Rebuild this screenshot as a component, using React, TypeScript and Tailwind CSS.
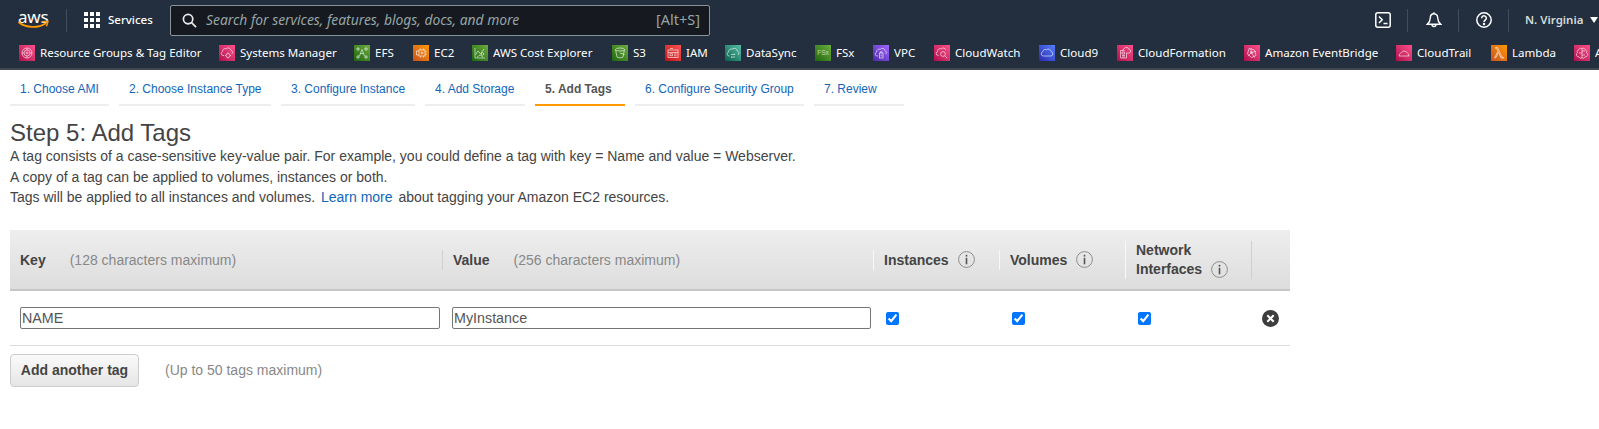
import React from "react";

const PINK = "bg-linear-to-tr from-[#b0084d] to-[#ff4f8b]";
const GREEN = "bg-linear-to-tr from-[#1b660f] to-[#6cae3e]";
const ORANGE = "bg-linear-to-tr from-[#c8511b] to-[#ff9900]";
const RED = "bg-linear-to-tr from-[#bd0816] to-[#ff5252]";
const TEAL = "bg-linear-to-tr from-[#055f4e] to-[#56c0a7]";
const PURPLE = "bg-linear-to-tr from-[#4d27a8] to-[#a166ff]";
const BLUE = "bg-linear-to-tr from-[#2e27ad] to-[#527fff]";

const glyphs: Record<string, React.ReactNode> = {
  resource: (
    <>
      <circle cx="8" cy="8" r="5" />
      <circle cx="8" cy="8" r="3" />
      <circle cx="8" cy="8" r="1" />
      <path d="M3 8h2M11 8h2M8 3v2M8 11v2" />
    </>
  ),
  systems: (
    <>
      <path d="M5 10.5H4a2 2 0 0 1-.4-3.900 2.600 2.600 0 0 1 3.600-2.800 2.800 2.800 0 0 1 4.800 1.600 2 2 0 0 1 .9 3.400" />
      <circle cx="9" cy="10.500" r="2" />
      <path d="M9 7.500v1M9 12.500v1M6 10.500h1M11 10.500h1" />
    </>
  ),
  efs: (
    <>
      <path d="M8 4.500 5.500 11M8 4.500l2.500 6.500M6.300 8.500h3.400" />
      <path d="M3 3h2v2H3zM11 3h2v2h-2zM3 11h2v2H3zM11 11h2v2h-2z" />
    </>
  ),
  ec2: (
    <>
      <path d="M6 10H3.500V6H6" />
      <rect x="6" y="5" width="6" height="6" />
      <path d="M7.500 3.500V5M10.500 3.500V5M7.500 11v1.500M10.500 11v1.500M12 7h1.500M12 9.500h1.500" />
      <circle cx="9" cy="8" r="1" />
    </>
  ),
  cost: (
    <>
      <path d="M3 3v10h10" />
      <path d="M3.500 10 6 6l2.500 3L12 4" />
      <path d="M5 12l3-2 3 2" />
      <circle cx="10.500" cy="9" r="1.300" />
    </>
  ),
  s3: (
    <>
      <ellipse cx="8" cy="4.500" rx="4.500" ry="1.500" />
      <path d="M3.500 4.500 5 12c.2 1 5.800 1 6 0l1.500-7.500" />
      <path d="M8 8l4.500 1.500" />
    </>
  ),
  iam: (
    <>
      <rect x="3" y="5" width="10" height="7.500" />
      <path d="M3 7.500h10" />
      <rect x="5" y="8.800" width="2.500" height="2" />
      <path d="M9 9h2.500M9 10.800h2.500M5 3.500h3" />
    </>
  ),
  datasync: (
    <>
      <path d="M4.500 11H4a2 2 0 0 1-.5-3.900 3 3 0 0 1 4-3 2.800 2.800 0 0 1 4.800 1.900 2.300 2.300 0 0 1 .7 4" />
      <path d="M6 9.500h4l-1-1M10 12H6l1 1" />
    </>
  ),
  vpc: (
    <>
      <path d="M5 11H4a2 2 0 0 1-.4-3.900 2.600 2.600 0 0 1 3.600-2.800 2.800 2.800 0 0 1 4.900 1.500 2.200 2.200 0 0 1 .8 3.300" />
      <rect x="6.500" y="8" width="3.500" height="5" />
      <path d="M7.500 8V6.800a.8.800 0 0 1 1.500 0V8M8.200 9.500v2" />
    </>
  ),
  watch: (
    <>
      <path d="M4.500 10.500H4a2 2 0 0 1-.4-3.900 2.600 2.600 0 0 1 3.600-2.800 2.800 2.800 0 0 1 4.600 1.200" />
      <circle cx="9" cy="9" r="2.400" />
      <path d="m10.800 10.800 2.400 2.400" />
    </>
  ),
  cloud9: (
    <path d="M4.800 11H4.300a2.200 2.200 0 0 1-.5-4.300 2.800 2.800 0 0 1 3.700-2 3 3 0 0 1 4.800 2 2.200 2.200 0 0 1-.4 4.300z" />
  ),
  formation: (
    <>
      <path d="M9.500 8V13h-6V5.500h4" />
      <path d="M7.500 7h-2.500v2h2.500zM5 10.500h3M5 12h3" />
      <path d="M6 5.200a2 2 0 0 1 1.500-1.900 2.600 2.600 0 0 1 4.500 1 1.900 1.900 0 0 1 .2 3.700H9.500" />
    </>
  ),
  bridge: (
    <>
      <path d="M5 3.500 10.500 5 12 10.500 7.500 12.500 3.500 9z" />
      <path d="M7 3v4.500l5-1M4 11l3.500-3.500 3 5" />
      <circle cx="7.500" cy="7.500" r="1" />
    </>
  ),
  trail: (
    <path d="M3 11h10a5 5 0 0 0-2.500-4 3.500 3.500 0 0 0-5 .4A4.500 4.500 0 0 0 3 11z" />
  ),
  lambda: (
    <path d="M3.500 13 7 6.200 5.700 3.300H4.500V2.500h2l4.500 9.800h1.500v.8h-2.200L7.500 7.500 4.600 13z" />
  ),
  brain: (
    <>
      <path d="M8 3.500v9.500M8 3.500a2 2 0 0 0-3 1 2.200 2.200 0 0 0-1.500 3.200A2.200 2.200 0 0 0 5 11.800a2 2 0 0 0 3 1" />
      <path d="M8 3.500a2 2 0 0 1 3 1 2.200 2.200 0 0 1 1.500 3.200 2.200 2.200 0 0 1-1.500 4.100 2 2 0 0 1-3 1" />
      <path d="M5 8h3M8 6h3M8 10h3" />
    </>
  ),
};

const services: { name: string; cls: string; icon: string; w: string }[] = [
  { name: "Resource Groups & Tag Editor", cls: PINK, icon: "resource", w: "w-[200px]" },
  { name: "Systems Manager", cls: PINK, icon: "systems", w: "w-[135px]" },
  { name: "EFS", cls: GREEN, icon: "efs", w: "w-[59px]" },
  { name: "EC2", cls: ORANGE, icon: "ec2", w: "w-[59px]" },
  { name: "AWS Cost Explorer", cls: GREEN, icon: "cost", w: "w-[140px]" },
  { name: "S3", cls: GREEN, icon: "s3", w: "w-[53px]" },
  { name: "IAM", cls: RED, icon: "iam", w: "w-[60px]" },
  { name: "DataSync", cls: TEAL, icon: "datasync", w: "w-[90px]" },
  { name: "FSx", cls: GREEN, icon: "fsx", w: "w-[58px]" },
  { name: "VPC", cls: PURPLE, icon: "vpc", w: "w-[61px]" },
  { name: "CloudWatch", cls: PINK, icon: "watch", w: "w-[105px]" },
  { name: "Cloud9", cls: BLUE, icon: "cloud9", w: "w-[78px]" },
  { name: "CloudFormation", cls: PINK, icon: "formation", w: "w-[127px]" },
  { name: "Amazon EventBridge", cls: PINK, icon: "bridge", w: "w-[152px]" },
  { name: "CloudTrail", cls: PINK, icon: "trail", w: "w-[95px]" },
  { name: "Lambda", cls: ORANGE, icon: "lambda", w: "w-[83px]" },
  { name: "Amazon Augmented AI", cls: PINK, icon: "brain", w: "w-[160px]" },
];

function ServiceIcon({ cls, icon }: { cls: string; icon: string }) {
  return (
    <span className={`block w-4 h-4 shrink-0 ${cls}`}>
      <svg viewBox="0 0 16 16" className="w-4 h-4" fill="none" stroke="#fff" strokeWidth="0.7" opacity="0.85">
        {icon === "fsx" ? (
          <text x="8" y="10.300" textAnchor="middle" fontSize="6.500" fill="#fff" stroke="none" opacity="0.75" fontFamily="Liberation Sans, sans-serif">FSx</text>
        ) : (
          glyphs[icon]
        )}
      </svg>
    </span>
  );
}

function Divider() {
  return <span className="block w-px h-[23px] bg-[#414b59] shrink-0" />;
}

function InfoIcon({ className = "" }: { className?: string }) {
  return (
    <svg viewBox="0 0 17 17" className={`w-[17px] h-[17px] shrink-0 ${className}`}>
      <circle cx="8.500" cy="8.500" r="7.900" fill="none" stroke="#8c8c8c" strokeWidth="1" />
      <rect x="7.700" y="3.800" width="1.600" height="1.800" fill="#555" />
      <rect x="7.700" y="6.800" width="1.600" height="6.500" fill="#555" />
    </svg>
  );
}

const tabs: { label: string; w: string; active?: boolean }[] = [
  { label: "1. Choose AMI", w: "w-[99px]" },
  { label: "2. Choose Instance Type", w: "w-[152px]" },
  { label: "3. Configure Instance", w: "w-[134px]" },
  { label: "4. Add Storage", w: "w-[100px]" },
  { label: "5. Add Tags", w: "w-[90px]", active: true },
  { label: "6. Configure Security Group", w: "w-[169px]" },
  { label: "7. Review", w: "w-[90px]" },
];

export default function App() {
  return (
    <div className="w-full min-h-[429px] bg-white text-[#444] font-['Liberation_Sans',Arial,sans-serif] overflow-hidden">
      <header className="bg-[#232f3e] border-b-2 border-[#414750] font-['Noto_Sans',sans-serif] text-white">
        <div className="h-10 flex items-center pl-[18px] pr-[1px]">
          <div className="relative w-[31px] h-[22px] shrink-0">
            <span className="block text-[17px] leading-[15px] font-normal tracking-[-0.2px]">aws</span>
            <svg viewBox="0 0 32 10" className="absolute left-0 top-[11px] w-[32px] h-[10px]">
              <path d="M1 2.500C8 8 20 8.500 27.500 3.500" fill="none" stroke="#ff9900" strokeWidth="1.800" strokeLinecap="round" />
              <path d="M24.500 1.800 30 1.300 28.500 6.300" fill="none" stroke="#ff9900" strokeWidth="1.500" strokeLinejoin="round" />
            </svg>
          </div>
          <span className="ml-[17px]"><Divider /></span>
          <svg viewBox="0 0 16 16" className="ml-[17px] w-4 h-4 shrink-0" fill="#fff">
            <rect x="0" y="0" width="4" height="4" /><rect x="6" y="0" width="4" height="4" /><rect x="12" y="0" width="4" height="4" />
            <rect x="0" y="6" width="4" height="4" /><rect x="6" y="6" width="4" height="4" /><rect x="12" y="6" width="4" height="4" />
            <rect x="0" y="12" width="4" height="4" /><rect x="6" y="12" width="4" height="4" /><rect x="12" y="12" width="4" height="4" />
          </svg>
          <span className="ml-2 w-[62px] text-[11.500px] font-medium shrink-0">Services</span>
          <div className="w-[540px] h-[31px] shrink-0 flex items-center rounded-[2px] border border-[#879596] bg-[#16191f] pl-[11px] pr-[9px]">
            <svg viewBox="0 0 16 16" className="w-[15px] h-[15px] shrink-0" fill="none" stroke="#e9ebed" strokeWidth="1.800">
              <circle cx="6.500" cy="6.500" r="5" />
              <path d="m10.200 10.200 4.800 4.800" />
            </svg>
            <span className="ml-[9px] italic text-[13.850px] text-[#95a5a6]">Search for services, features, blogs, docs, and more</span>
            <span className="ml-auto text-[14.500px] text-[#95a5a6]">[Alt+S]</span>
          </div>
          <div className="ml-auto flex items-center">
            <svg viewBox="0 0 16 16" className="w-4 h-4 shrink-0" fill="none" stroke="#fff" strokeWidth="1.500">
              <rect x="0.800" y="0.800" width="14.400" height="14.400" rx="2" />
              <path d="m4 4.500 3.200 3.200L4 11M8.500 11.500h4" />
            </svg>
            <span className="ml-[16px]"><Divider /></span>
            <svg viewBox="0 0 16 16" className="ml-[18px] w-4 h-4 shrink-0" fill="none" stroke="#fff" strokeWidth="1.400">
              <path d="M8 1.800c-2.500 0-3.700 1.900-3.700 4.200 0 3-1.300 4.700-3 6.300h13.400c-1.700-1.600-3-3.300-3-6.300 0-2.300-1.200-4.200-3.700-4.200z" />
              <path d="M8 .2v1.600M6 12.500a2 2 0 0 0 4 0" />
            </svg>
            <span className="ml-[16px]"><Divider /></span>
            <svg viewBox="0 0 16 16" className="ml-[17px] w-4 h-4 shrink-0" fill="none" stroke="#fff" strokeWidth="1.500">
              <circle cx="8" cy="8" r="7.200" />
              <path d="M5.700 6.200A2.300 2.300 0 1 1 9.300 8c-.8.500-1.300 1-1.300 2" />
              <circle cx="8" cy="12" r=".5" fill="#fff" />
            </svg>
            <span className="ml-[16px]"><Divider /></span>
            <span className="ml-[16px] w-[65px] text-[11.500px] font-semibold text-[#d5dbdb]">N. Virginia</span>
            <svg viewBox="0 0 8 6" className="w-2 h-[6px]" fill="#fff"><path d="M0 0h8L4 6z" /></svg>
          </div>
        </div>
        <nav className="h-7 flex items-center pl-[19px] pb-[2px] overflow-hidden whitespace-nowrap text-[11.550px] text-white">
          {services.map((s) => (
            <div key={s.name} className={`flex items-center gap-[5px] shrink-0 ${s.w}`}>
              <ServiceIcon cls={s.cls} icon={s.icon} />
              <span>{s.name}</span>
            </div>
          ))}
        </nav>
      </header>

      <div className="flex gap-[10px] pl-[10px] text-xs">
        {tabs.map((t) => (
          <div
            key={t.label}
            className={`${t.w} pl-[10px] pt-[11px] pb-[7px] leading-4 border-b-2 whitespace-nowrap ${
              t.active ? "border-[#ff9900] text-[#555] font-bold" : "border-[#eeeeee] text-[#1166bb]"
            }`}
          >
            {t.label}
          </div>
        ))}
      </div>

      <main className="px-[10px]">
        <h1 className="mt-[14px] text-2xl leading-[26px] font-normal text-[#444]">Step 5: Add Tags</h1>
        <div className="text-sm leading-[20.670px] text-[#444]">
          <p>A tag consists of a case-sensitive key-value pair. For example, you could define a tag with key = Name and value = Webserver.</p>
          <p>A copy of a tag can be applied to volumes, instances or both.</p>
          <p>
            Tags will be applied to all instances and volumes. <span className="ml-[2px] text-[#1166bb]">Learn more</span>{" "}
            <span className="ml-[2px]">about tagging your Amazon EC2 resources.</span>
          </p>
        </div>

        <div className="mt-[22px] w-[1280px]">
          <div className="h-[61px] grid grid-cols-[432px_431px_126px_126px_126px_39px] items-center bg-linear-to-b from-[#eeeeee] to-[#dddddd] border-b-2 border-[#c6c6c6] text-sm">
            <div className="pl-[10px] flex">
              <b className="text-[#444]">Key</b>
              <span className="ml-[24px] text-[#888]">(128 characters maximum)</span>
            </div>
            <div className="h-[20px] border-l border-[#cfcfcf] pl-[10px] flex items-center">
              <b className="text-[#444]">Value</b>
              <span className="ml-[24px] text-[#888]">(256 characters maximum)</span>
            </div>
            <div className="h-[20px] border-l border-[#f8f8f8] pl-[10px] flex items-center font-bold text-[#444]">
              Instances <InfoIcon className="ml-[9px]" />
            </div>
            <div className="h-[20px] border-l border-[#f8f8f8] pl-[10px] flex items-center font-bold text-[#444]">
              Volumes <InfoIcon className="ml-[9px]" />
            </div>
            <div className="h-[38px] border-l border-[#f8f8f8] pl-[10px] font-bold text-[#444] leading-[19px]">
              <div>Network</div>
              <div className="flex items-center">Interfaces <InfoIcon className="ml-[9px]" /></div>
            </div>
            <div className="h-[38px] border-l border-[#cfcfcf]" />
          </div>
          <div className="h-[55px] grid grid-cols-[432px_431px_126px_126px_126px_39px] items-center border-b border-[#dddddd] pb-[1px]">
            <div className="pl-[10px]">
              <input readOnly value="NAME" className="block w-[420px] h-[22px] px-[1px] border border-[#767676] rounded-[2px] text-[14.300px] text-[#555] bg-white" />
            </div>
            <div className="pl-[10px]">
              <input readOnly value="MyInstance" className="block w-[419px] h-[22px] px-[1px] border border-[#767676] rounded-[2px] text-[14.300px] text-[#555] bg-white" />
            </div>
            <div className="pl-[13px] pt-[1px] flex"><input type="checkbox" readOnly checked className="block" /></div>
            <div className="pl-[13px] pt-[1px] flex"><input type="checkbox" readOnly checked className="block" /></div>
            <div className="pl-[13px] pt-[1px] flex"><input type="checkbox" readOnly checked className="block" /></div>
            <div className="pl-[11px] pt-[1px] flex">
              <svg viewBox="0 0 17 17" className="w-[17px] h-[17px]">
                <circle cx="8.500" cy="8.500" r="8.500" fill="#3d3d3d" />
                <path d="m5.300 5.300 6.400 6.400M11.700 5.300l-6.400 6.400" stroke="#fff" strokeWidth="2" />
              </svg>
            </div>
          </div>
          <div className="mt-2 flex items-center">
            <button className="w-[129px] h-[33px] pb-[1px] rounded-[4px] border border-[#cccccc] bg-linear-to-b from-[#fafafa] to-[#e6e6e6] text-sm font-bold text-[#444]">
              Add another tag
            </button>
            <span className="ml-[26px] mb-[1px] text-sm text-[#888]">(Up to 50 tags maximum)</span>
          </div>
        </div>
      </main>
    </div>
  );
}
